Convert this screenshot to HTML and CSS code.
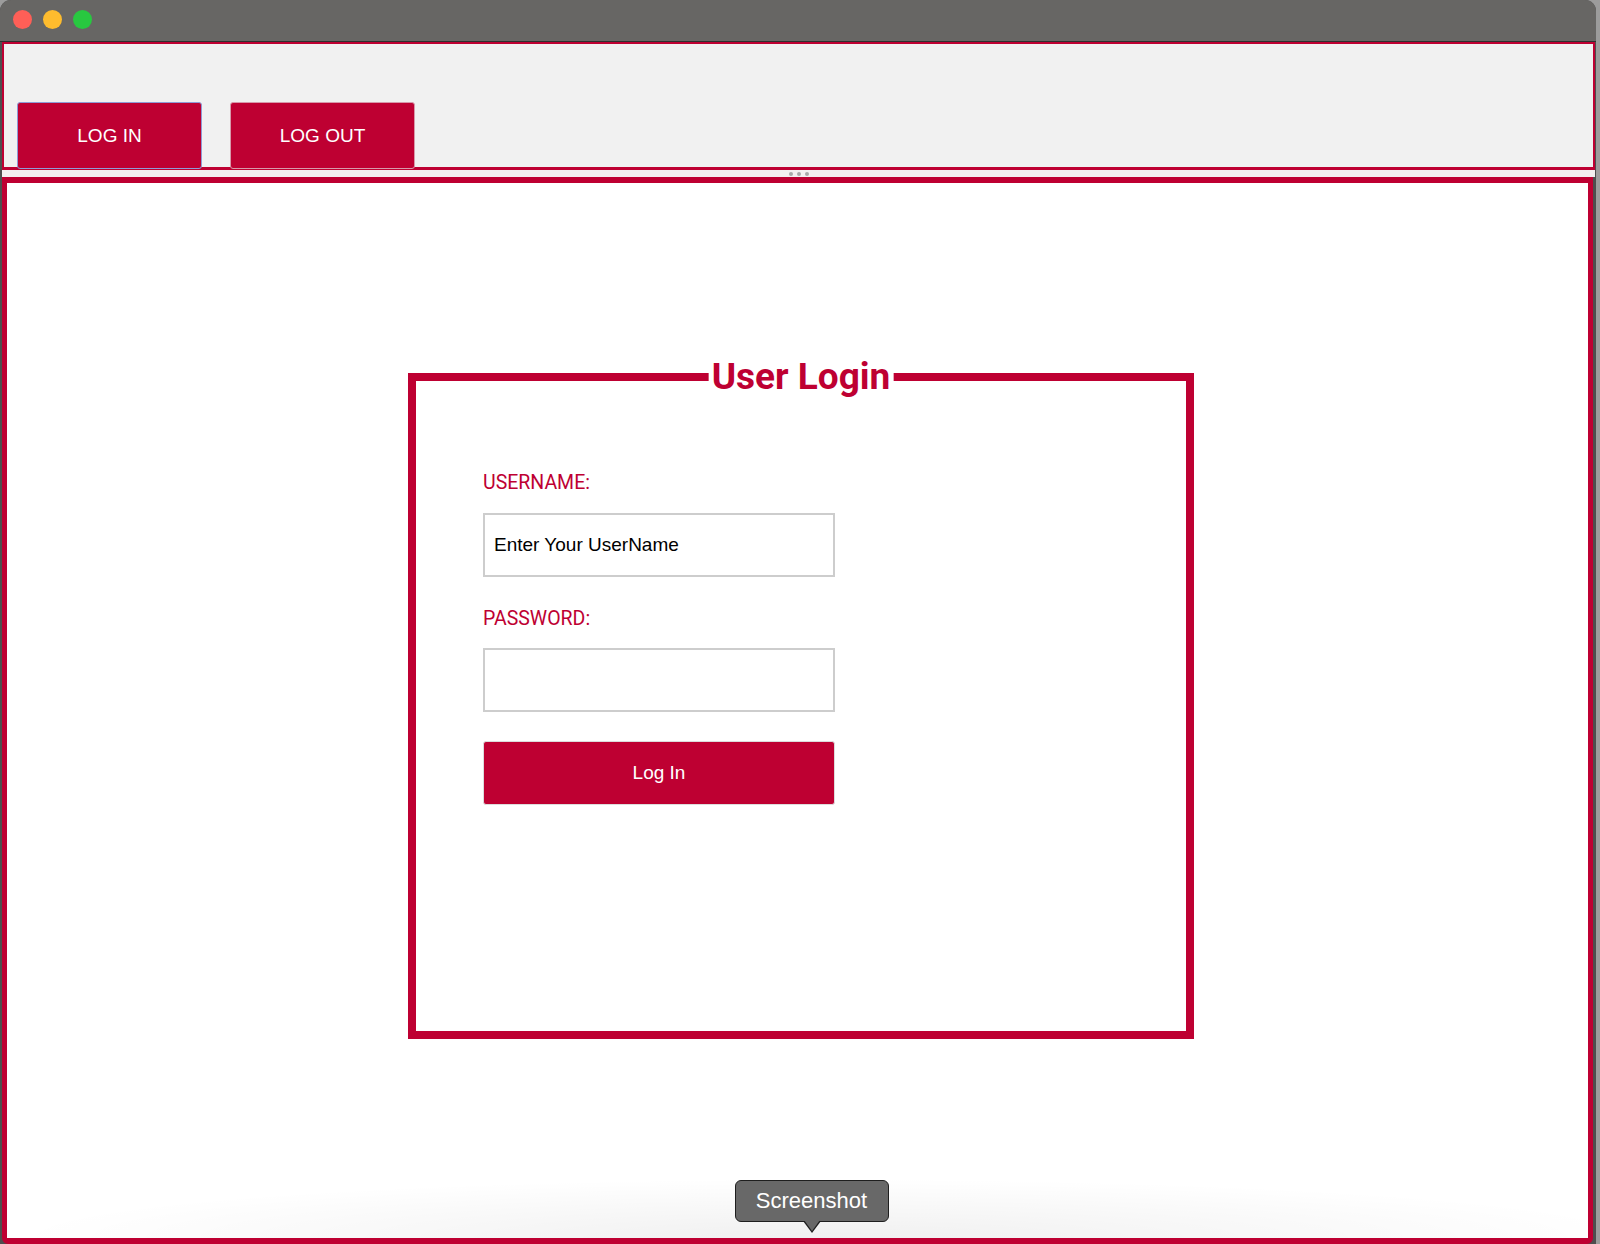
FILE: index.html
```html
<!DOCTYPE html>
<html lang="en">
<head>
<meta charset="utf-8">
<title>User Login</title>
<link rel="stylesheet" href="styles.css">
</head>
<body>
<div class="window">
  <div class="titlebar">
    <span class="light light-close"></span>
    <span class="light light-min"></span>
    <span class="light light-max"></span>
  </div>
  <div class="toolbar">
    <button class="nav-btn nav-btn-focus" type="button">LOG IN</button>
    <button class="nav-btn" type="button">LOG OUT</button>
  </div>
  <div class="splitter">
    <span class="dot"></span><span class="dot"></span><span class="dot"></span>
  </div>
  <div class="content">
    <div class="login-box">
      <div class="login-title">User Login</div>
      <label class="field-label" for="username">USERNAME:</label>
      <input class="field-input field-user" id="username" type="text" value="Enter Your UserName">
      <label class="field-label field-label-pass" for="password">PASSWORD:</label>
      <input class="field-input field-pass" id="password" type="password">
      <button class="submit-btn" type="button">Log In</button>
    </div>
    <div class="tooltip">Screenshot</div>
  </div>
</div>
</body>
</html>
```

FILE: styles.css
```css
html, body {
  margin: 0;
  padding: 0;
}

body {
  width: 1600px;
  height: 1244px;
  overflow: hidden;
  background: #9c9c9c;
  font-family: "Liberation Sans", Arial, sans-serif;
}

.window {
  width: 1596px;
  height: 1244px;
  display: flex;
  flex-direction: column;
  background: #4e4e4e;
  border-radius: 11px 11px 0 0;
  overflow: hidden;
}

.titlebar {
  height: 40px;
  flex: none;
  background: #676664;
  border-bottom: 1px solid #2f2f2f;
  display: flex;
  align-items: center;
  gap: 11px;
  padding-left: 13px;
  padding-top: 1px;
}

.light {
  width: 19px;
  height: 19px;
  border-radius: 50%;
  display: block;
  margin-top: -3px;
}

.light-close { background: #fe5f57; }
.light-min { background: #febc2e; }
.light-max { background: #28c840; }

.toolbar {
  flex: none;
  height: 128px;
  box-sizing: border-box;
  margin: 0 1px 0 2px;
  background: #f1f1f1;
  border: 2px solid #be0032;
  border-bottom-width: 3px;
  display: flex;
  align-items: flex-end;
  gap: 28px;
  padding-left: 13px;
}

.nav-btn {
  width: 185px;
  height: 67px;
  margin-bottom: -2px;
  background: #be0032;
  color: #ffffff;
  border: 1px solid #d79aab;
  border-radius: 3px;
  font-family: "Liberation Sans", Arial, sans-serif;
  font-size: 19px;
  padding: 0;
  cursor: pointer;
}

.nav-btn-focus {
  border-color: #8f9bd6;
}

.splitter {
  flex: none;
  height: 7px;
  margin: 0 1px 0 2px;
  background: #f3f0f0;
  display: flex;
  justify-content: center;
  align-items: center;
  gap: 4px;
}

.dot {
  width: 4px;
  height: 4px;
  border-radius: 50%;
  background: #a9a9a9;
  display: block;
}

.content {
  flex: 1;
  position: relative;
  margin: 0 3px 0 2px;
  background: #ffffff;
  border: solid #be0032;
  border-width: 6px 5px 6px 5px;
  border-radius: 0 0 6px 6px;
  display: flex;
  align-items: center;
  justify-content: center;
  padding: 0 0 9px 7px;
}

.content::after {
  content: "";
  position: absolute;
  left: 0;
  right: 0;
  bottom: 0;
  height: 70px;
  background: radial-gradient(ellipse 820px 60px at 52% 100%, rgba(0, 0, 0, 0.06), rgba(0, 0, 0, 0) 100%);
  pointer-events: none;
}

.login-box {
  position: relative;
  width: 786px;
  height: 666px;
  box-sizing: border-box;
  border: 8px solid #be0032;
  padding: 90px 0 0 67px;
  display: flex;
  flex-direction: column;
  align-items: flex-start;
  background: #ffffff;
}

.login-title {
  position: absolute;
  top: -23px;
  left: 50%;
  transform: translateX(-50%);
  background: #ffffff;
  padding: 0 3px;
  font-family: Roboto, "Liberation Sans", sans-serif;
  font-weight: 700;
  font-size: 37px;
  line-height: 37px;
  color: #be0032;
  white-space: nowrap;
}

.field-label {
  display: block;
  height: 24px;
  font-family: Roboto, "Liberation Sans", sans-serif;
  font-size: 19.5px;
  line-height: 24px;
  color: #be0032;
}

.field-label-pass {
  margin-top: 30px;
}

.field-input {
  display: block;
  width: 352px;
  height: 64px;
  box-sizing: border-box;
  border: 2px solid #cdcdcd;
  border-radius: 0;
  background: #ffffff;
  padding: 0 9px;
  font-family: "Liberation Sans", Arial, sans-serif;
  font-size: 19px;
  color: #000000;
  outline: none;
}

.field-user {
  margin-top: 18px;
}

.field-pass {
  margin-top: 17px;
}

.submit-btn {
  display: block;
  width: 352px;
  height: 64px;
  margin-top: 29px;
  box-sizing: border-box;
  background: #be0032;
  color: #ffffff;
  border: 1px solid #dcdcdc;
  border-radius: 3px;
  font-family: "Liberation Sans", Arial, sans-serif;
  font-size: 19px;
  padding: 0;
  cursor: pointer;
}

.tooltip {
  position: absolute;
  bottom: 16px;
  left: calc(50% + 14px);
  transform: translateX(-50%);
  width: 154px;
  height: 42px;
  box-sizing: border-box;
  background: #686868;
  border: 1px solid #1e1e1e;
  border-radius: 6px;
  color: #ffffff;
  font-family: "Liberation Sans", Arial, sans-serif;
  font-size: 22px;
  line-height: 40px;
  text-align: center;
  z-index: 2;
}

.tooltip::before,
.tooltip::after {
  content: "";
  position: absolute;
  left: 50%;
  width: 0;
  height: 0;
  border-style: solid;
  border-color: transparent;
}

.tooltip::before {
  top: 40px;
  margin-left: -9px;
  border-width: 12px 9px 0 9px;
  border-top-color: #1e1e1e;
}

.tooltip::after {
  top: 39px;
  margin-left: -8px;
  border-width: 11px 8px 0 8px;
  border-top-color: #686868;
}
```
